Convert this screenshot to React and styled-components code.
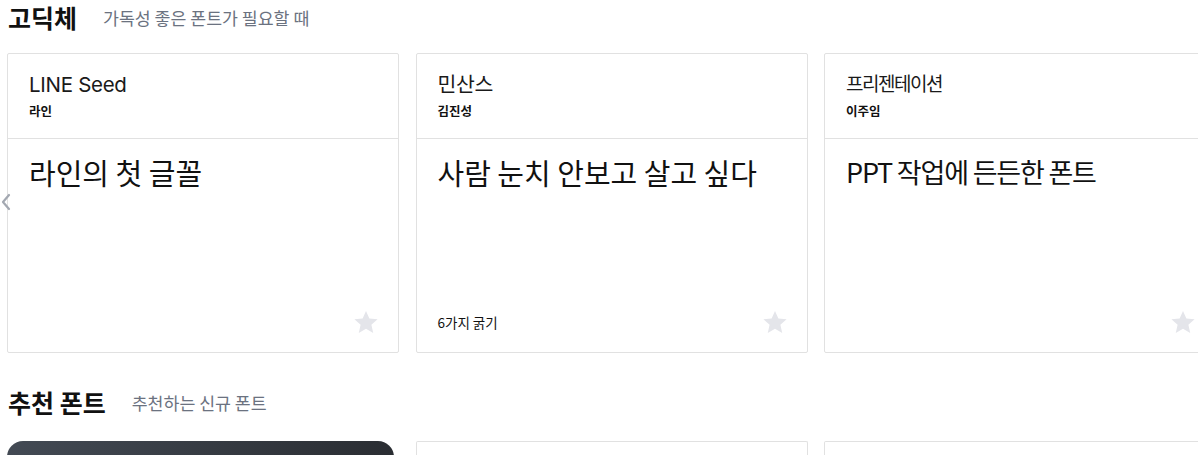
import React from "react";
import styled, { createGlobalStyle } from "styled-components";

const Global = createGlobalStyle`
  html, body { margin: 0; padding: 0; background: #fff; overflow: hidden; }
  body { font-family: "Noto Sans", "Noto Sans CJK KR", sans-serif; color: #111; }
`;

const Page = styled.div`
  width: 1198px;
  height: 455px;
  overflow: hidden;
  padding-left: 7px;
  box-sizing: border-box;
`;

const Section = styled.section`
  margin-top: ${(p) => p.$top || 0}px;
`;

const SectionHead = styled.div`
  display: flex;
  align-items: center;
  height: 34px;
  margin-bottom: ${(p) => p.$gap}px;
  padding-left: 1px;
`;

const SectionTitle = styled.h2`
  margin: 0;
  font-family: "Noto Sans CJK KR", sans-serif;
  font-size: 25px;
  font-weight: 700;
  color: #111;
`;

const SectionSub = styled.span`
  margin-left: ${(p) => p.$gap}px;
  font-family: "Noto Sans CJK KR", sans-serif;
  font-size: 17.3px;
  color: #6b7280;
`;

const Carousel = styled.div`
  position: relative;
`;

const Row = styled.div`
  display: flex;
  gap: 16.5px;
`;

const Card = styled.div`
  flex: 0 0 392px;
  height: 300px;
  box-sizing: border-box;
  border: 1px solid #e1e1e1;
  border-radius: 2px;
  display: flex;
  flex-direction: column;
  background: #fff;
`;

const CardHead = styled.div`
  height: 85px;
  box-sizing: border-box;
  border-bottom: 1px solid #e1e1e1;
  padding: 17px 21px 0;
`;

const FontName = styled.div`
  font-family: "Inter", "Noto Sans CJK KR", sans-serif;
  font-size: ${(p) => (p.$condensed ? 19 : 20.5)}px;
  letter-spacing: ${(p) => (p.$condensed ? -1.5 : -0.3)}px;
  line-height: 28px;
  color: #1a1a1a;
`;

const Author = styled.div`
  font-family: "Noto Sans CJK KR", sans-serif;
  font-size: 12.5px;
  font-weight: 700;
  line-height: 18px;
  margin-top: 3px;
  color: #111;
`;

const CardBody = styled.div`
  flex: 1;
  display: flex;
  flex-direction: column;
  padding: 13px 21px 16px;
`;

const Sample = styled.div`
  font-family: "Noto Sans CJK KR", sans-serif;
  font-size: ${(p) => (p.$condensed ? 27 : 29)}px;
  letter-spacing: ${(p) => (p.$condensed ? -1.2 : 0)}px;
  line-height: 40px;
  color: #111;
  flex: 1;
`;

const CardFoot = styled.div`
  display: flex;
  align-items: center;
  justify-content: space-between;
  height: 26px;
  margin-right: -2px;
  margin-bottom: 1px;
`;

const Weights = styled.span`
  font-family: "Noto Sans CJK KR", sans-serif;
  font-size: 13.5px;
  color: #111;
`;

const StarBtn = styled.span`
  display: flex;
  width: 26px;
  height: 26px;
  align-items: center;
  justify-content: center;
  margin-left: auto;
`;

const Chevron = styled.span`
  position: absolute;
  left: -8px;
  top: 137px;
  display: flex;
  width: 14px;
  height: 24px;
  align-items: center;
  justify-content: center;
`;

const PromoCard = styled.div`
  flex: 0 0 ${(p) => (p.$dark ? 387 : 392)}px;
  height: 40px;
  box-sizing: border-box;
  border-radius: ${(p) => (p.$dark ? "16px 16px 0 0" : "2px 2px 0 0")};
  border: ${(p) => (p.$dark ? "none" : "1px solid #e1e1e1")};
  border-bottom: none;
  background: ${(p) =>
    p.$dark ? "linear-gradient(100deg, #434a54 0%, #2a2d32 100%)" : "#fff"};
  margin-right: ${(p) => (p.$dark ? 5 : 0)}px;
`;

const Star = () => (
  <svg width="24" height="24" viewBox="1.5 1.8 21 20">
    <path
      fill="#e4e5ea"
      d="M12 2.2l2.95 6.6 7.2.7-5.43 4.8 1.6 7.05L12 17.65 5.68 21.35l1.6-7.05L1.85 9.5l7.2-.7z"
    />
  </svg>
);

const ChevronLeft = () => (
  <svg width="10" height="18" viewBox="0 0 10 18">
    <path d="M8 2 L2 9 L8 16" fill="none" stroke="#a3a8b1" strokeWidth="2.2" strokeLinecap="round" strokeLinejoin="round" />
  </svg>
);

const fonts = [
  { name: "LINE Seed", author: "라인", sample: "라인의 첫 글꼴" },
  { name: "민산스", author: "김진성", sample: "사람 눈치 안보고 살고 싶다", weights: "6가지 굵기" },
  { name: "프리젠테이션", author: "이주임", sample: "PPT 작업에 든든한 폰트", condensed: true },
];

export default function App() {
  return (
    <Page>
      <Global />
      <Section>
        <SectionHead $gap={19}>
          <SectionTitle>고딕체</SectionTitle>
          <SectionSub $gap={26}>가독성 좋은 폰트가 필요할 때</SectionSub>
        </SectionHead>
        <Carousel>
          <Row>
            {fonts.map((f) => (
              <Card key={f.name}>
                <CardHead>
                  <FontName $condensed={f.condensed}>{f.name}</FontName>
                  <Author>{f.author}</Author>
                </CardHead>
                <CardBody>
                  <Sample $condensed={f.condensed}>{f.sample}</Sample>
                  <CardFoot>
                    {f.weights && <Weights>{f.weights}</Weights>}
                    <StarBtn>
                      <Star />
                    </StarBtn>
                  </CardFoot>
                </CardBody>
              </Card>
            ))}
          </Row>
          <Chevron>
            <ChevronLeft />
          </Chevron>
        </Carousel>
      </Section>
      <Section $top={32}>
        <SectionHead $gap={22}>
          <SectionTitle>추천 폰트</SectionTitle>
          <SectionSub $gap={26}>추천하는 신규 폰트</SectionSub>
        </SectionHead>
        <Row>
          <PromoCard $dark />
          <PromoCard />
          <PromoCard />
        </Row>
      </Section>
    </Page>
  );
}
